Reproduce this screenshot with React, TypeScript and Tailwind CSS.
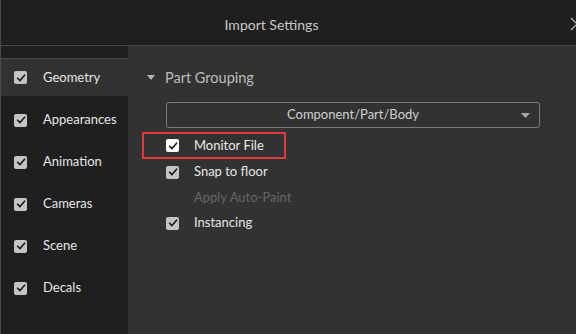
import React from 'react';

const sections = ['Geometry', 'Appearances', 'Animation', 'Cameras', 'Scene', 'Decals'];

const Check: React.FC<{ white?: boolean }> = ({ white }) => (
    <span className={`w-[13px] h-[13px] rounded-[2px] flex items-center justify-center shrink-0 ${white ? 'bg-white' : 'bg-[#c4c4c4]'}`}>
        <svg width="10" height="10" viewBox="0 0 10 10" fill="none">
            <path d="M1.6 5.2 L4 7.6 L8.6 2.2" stroke="#1a1a1a" strokeWidth="1.6" strokeLinecap="round" strokeLinejoin="round" />
        </svg>
    </span>
);

export default function App() {
    return (
        <div className="w-[576px] h-[334px] bg-[#323232] border-l border-[#4a4a4a] flex flex-col overflow-hidden text-[13px]" style={{ fontFamily: 'Lato, "Open Sans", sans-serif' }}>
            <div className="h-[46px] shrink-0 bg-[#1f1f1f] border-b border-[#474747] relative flex items-center justify-center pr-[34px] pt-[3px]">
                <span className="text-[14px] text-[#c8c8c8]">Import Settings</span>
                <svg className="absolute left-[569px] top-[17px]" width="14" height="14" viewBox="0 0 14 14" fill="none">
                    <path d="M1 1 L13 13 M13 1 L1 13" stroke="#bdbdbd" strokeWidth="1.2" />
                </svg>
            </div>
            <div className="flex flex-1">
                <div className="w-[127px] bg-[#1f1f1f] pt-[12px] flex flex-col">
                    {sections.map((s, i) => (
                        <div
                            key={s}
                            className={`flex items-center pl-[13px] gap-[16px] ${i === 0 ? 'h-[38px] mb-[3px] bg-[#323232] border-t border-[#4a4a4a] -mr-px' : 'h-[42px]'}`}
                        >
                            <Check />
                            <span className="text-[#e6e6e6]">{s}</span>
                        </div>
                    ))}
                </div>
                <div className="flex-1 flex flex-col pt-[22px]">
                    <div className="flex items-center h-[20px] pl-[19px] gap-[10px]">
                        <svg width="8" height="6" viewBox="0 0 8 6"><path d="M0 0 L8 0 L4 5 Z" fill="#b5b5b5" /></svg>
                        <span className="text-[14.5px] text-[#bdbdbd]">Part Grouping</span>
                    </div>
                    <div className="ml-[38px] mt-[14px] w-[374px] h-[26px] border border-[#7a7a7a] rounded-[3px] relative flex items-center justify-center">
                        <span className="text-[#d0d0d0]">Component/Part/Body</span>
                        <svg className="absolute right-[9px] top-[10px]" width="9" height="6" viewBox="0 0 9 6"><path d="M0 0 L9 0 L4.5 5 Z" fill="#a8a8a8" /></svg>
                    </div>
                    <div className="mt-[4px] flex flex-col">
                        <div className="ml-[14px] w-[144px] h-[27px] border-2 border-[#e0393c] flex items-center pl-[22px] gap-[15px]">
                            <Check white />
                            <span className="text-[#ececec]">Monitor File</span>
                        </div>
                        <div className="ml-[14px] w-[144px] h-[26px] flex items-center pl-[24px] gap-[15px]">
                            <Check />
                            <span className="text-[#e6e6e6]">Snap to floor</span>
                        </div>
                        <div className="ml-[14px] w-[200px] h-[25px] flex items-center pl-[52px]">
                            <span className="text-[#666666]">Apply Auto-Paint</span>
                        </div>
                        <div className="ml-[14px] w-[144px] h-[26px] flex items-center pl-[24px] gap-[15px]">
                            <Check />
                            <span className="text-[#e6e6e6]">Instancing</span>
                        </div>
                    </div>
                </div>
            </div>
        </div>
    );
}
